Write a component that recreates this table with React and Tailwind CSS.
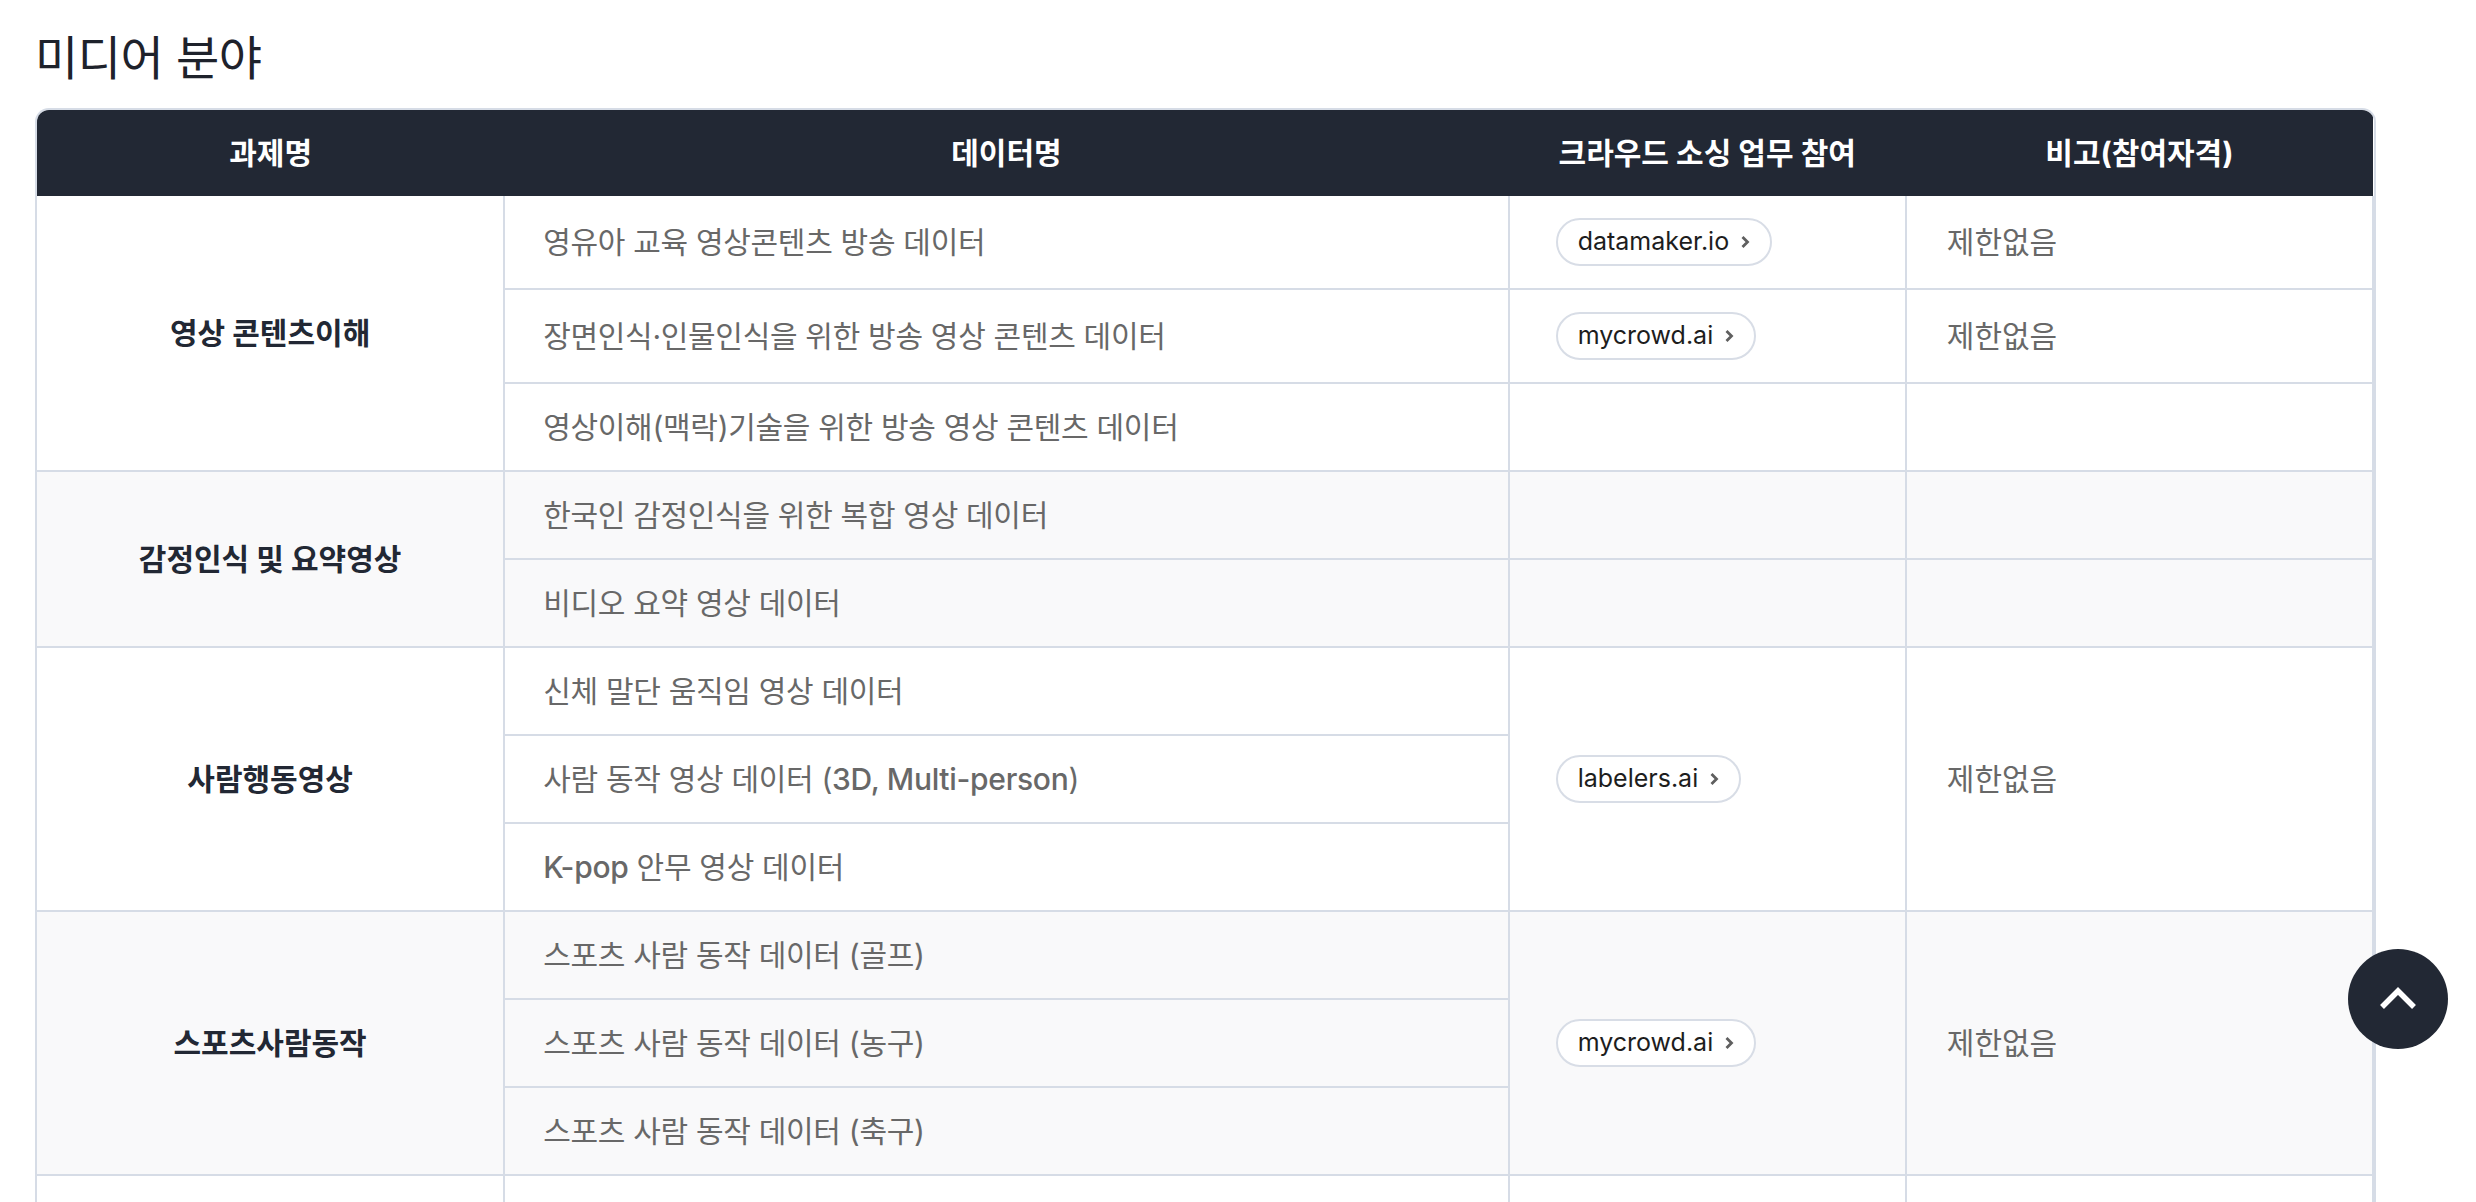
import React from "react";

const groups = [
  {
    name: "영상 콘텐츠이해",
    shaded: false,
    rows: [
      { data: "영유아 교육 영상콘텐츠 방송 데이터", site: "datamaker.io", note: "제한없음" },
      { data: "장면인식·인물인식을 위한 방송 영상 콘텐츠 데이터", site: "mycrowd.ai", note: "제한없음" },
      { data: "영상이해(맥락)기술을 위한 방송 영상 콘텐츠 데이터", site: "", note: "" },
    ],
  },
  {
    name: "감정인식 및 요약영상",
    shaded: true,
    rows: [
      { data: "한국인 감정인식을 위한 복합 영상 데이터", site: "", note: "" },
      { data: "비디오 요약 영상 데이터", site: "", note: "" },
    ],
  },
  {
    name: "사람행동영상",
    shaded: false,
    site: "labelers.ai",
    note: "제한없음",
    rows: [
      { data: "신체 말단 움직임 영상 데이터" },
      { data: "사람 동작 영상 데이터 (3D, Multi-person)" },
      { data: "K-pop 안무 영상 데이터" },
    ],
  },
  {
    name: "스포츠사람동작",
    shaded: true,
    site: "mycrowd.ai",
    note: "제한없음",
    rows: [
      { data: "스포츠 사람 동작 데이터 (골프)" },
      { data: "스포츠 사람 동작 데이터 (농구)" },
      { data: "스포츠 사람 동작 데이터 (축구)" },
    ],
  },
];

const font = { fontFamily: "'Inter', 'Noto Sans CJK KR', sans-serif" };

// latin runs look a bit heavier than the hangul in the original
const DataText = ({ text }) =>
  text.split(/([A-Za-z0-9][A-Za-z0-9,\- ]*[A-Za-z0-9])/).map((part, i) =>
    i % 2 === 1 ? (
      <span key={i} className="font-medium">
        {part}
      </span>
    ) : (
      part
    )
  );

const SitePill = ({ label }) => (
  <span className="inline-flex h-[48px] items-center gap-[11px] rounded-full border-2 border-[#d8dde6] bg-white px-[20px] text-[25px] text-[#1d1d1d]">
    {label}
    <svg width="10" height="14" viewBox="0 0 10 14" fill="none">
      <path d="M2.5 2L7.5 7L2.5 12" stroke="#5f5f5f" strokeWidth="2.8" />
    </svg>
  </span>
);

const cell = "border-b-2 border-r-2 border-[#d6dce6] align-middle";

const App = () => {
  return (
    <div className="min-h-screen bg-white pl-[35px] pt-[26px]" style={font}>
      <h2 className="mb-[18px] text-[47px] font-normal leading-[64px] tracking-[-0.01em] text-[#1e222b]">미디어 분야</h2>

      <div className="w-[2341px] overflow-hidden rounded-t-[14px] border-x-2 border-t-2 border-[#d6dce6]">
        <table className="w-full table-fixed border-collapse">
          <colgroup>
            <col className="w-[20%]" />
            <col className="w-[43%]" />
            <col className="w-[17%]" />
            <col className="w-[20%]" />
          </colgroup>
          <thead>
            <tr className="h-[86px] bg-[#222834] text-[30px] font-bold text-white">
              <th>과제명</th>
              <th>데이터명</th>
              <th>크라우드 소싱 업무 참여</th>
              <th>비고(참여자격)</th>
            </tr>
          </thead>
          <tbody>
            {groups.map((g, gi) =>
              g.rows.map((r, ri) => (
                <tr key={`${gi}-${ri}`} className={`h-[88px] ${g.shaded ? "bg-[#f9f9fa]" : "bg-white"}`}>
                  {ri === 0 && (
                    <td rowSpan={g.rows.length} className={`${cell} text-center text-[30px] font-bold text-[#222834]`}>
                      {g.name}
                    </td>
                  )}
                  <td className={`${cell} px-[38px] text-[30px] leading-[40px] tracking-[-0.01em] text-[#686868]`}>
                    <DataText text={r.data} />
                  </td>
                  {g.site !== undefined ? (
                    ri === 0 && (
                      <>
                        <td rowSpan={g.rows.length} className={`${cell} px-[46px] py-[22px]`}>
                          <SitePill label={g.site} />
                        </td>
                        <td rowSpan={g.rows.length} className={`${cell} border-r-0 px-[40px] text-[30px] text-[#686868]`}>
                          {g.note}
                        </td>
                      </>
                    )
                  ) : (
                    <>
                      <td className={`${cell} px-[46px] py-[22px]`}>{r.site && <SitePill label={r.site} />}</td>
                      <td className={`${cell} border-r-0 px-[40px] text-[30px] text-[#686868]`}>{r.note}</td>
                    </>
                  )}
                </tr>
              ))
            )}
            <tr className="h-[88px] bg-white">
              <td className={cell}></td>
              <td className={cell}></td>
              <td className={cell}></td>
              <td className={`${cell} border-r-0`}></td>
            </tr>
          </tbody>
        </table>
      </div>

      <button className="fixed bottom-[153px] right-[28px] flex h-[100px] w-[100px] items-center justify-center rounded-full bg-[#222834]">
        <svg width="40" height="26" viewBox="0 0 40 26" fill="none">
          <path d="M4 21L20 5L36 21" stroke="white" strokeWidth="5.5" />
        </svg>
      </button>
    </div>
  );
};

export default App;
